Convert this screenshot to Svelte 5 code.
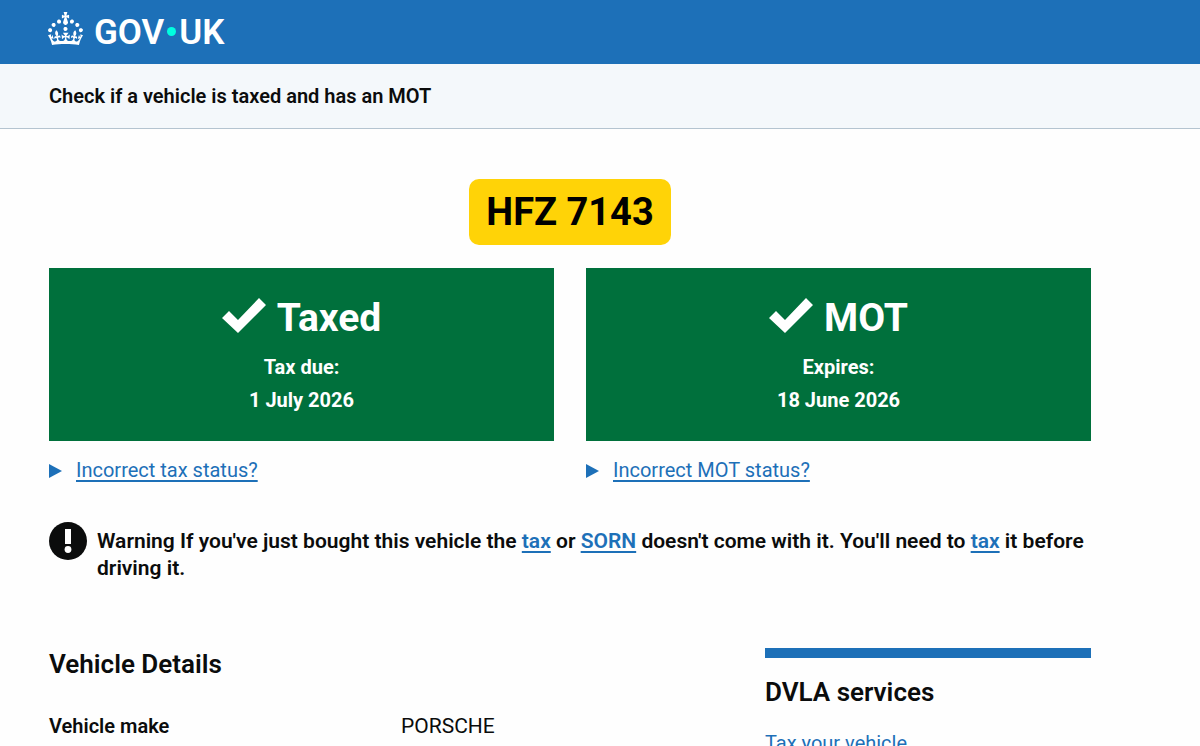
<script>
  const statuses = [
    { title: 'Taxed', label: 'Tax due:', date: '1 July 2026', help: 'Incorrect tax status?' },
    { title: 'MOT', label: 'Expires:', date: '18 June 2026', help: 'Incorrect MOT status?' }
  ];
  const details = [{ key: 'Vehicle make', value: 'PORSCHE' }];
</script>

<header class="masthead">
  <a class="logo" href="#home" aria-label="GOV.UK">
    <svg class="crown" viewBox="0 0 32 30" aria-hidden="true">
      <path d="M22.6 10.4c-1 .4-2-.1-2.4-1-.4-.9.1-2 1-2.4.9-.4 2 .1 2.4 1s-.1 2-1 2.4m-5.9 6.7c-.9.4-2-.1-2.4-1-.4-.9.1-2 1-2.4.9-.4 2 .1 2.4 1s-.1 2-1 2.4m10.8-3.7c-1 .4-2-.1-2.4-1-.4-.9.1-2 1-2.4.9-.4 2 .1 2.4 1s0 2-1 2.4m3.3 4.8c-1 .4-2-.1-2.4-1-.4-.9.1-2 1-2.4.9-.4 2 .1 2.4 1s-.1 2-1 2.4M17 4.7l2.3 1.2V2.5l-2.3.7-.2-.2.9-3h-3.4l.9 3-.2.2c-.1.1-2.3-.7-2.3-.7v3.4L15 4.7c.1.1.1.2.2.2l-1.3 4c-.1.2-.1.4-.1.6 0 1.1.8 2 1.9 2.2h.7c1-.2 1.9-1.1 1.9-2.1 0-.2 0-.4-.1-.6l-1.3-4c-.1-.2 0-.2.1-.3m-7.6 5.7c.9.4 2-.1 2.4-1 .4-.9-.1-2-1-2.4-.9-.4-2 .1-2.4 1s0 2 1 2.4m-5 3c.9.4 2-.1 2.4-1 .4-.9-.1-2-1-2.4-.9-.4-2 .1-2.4 1s.1 2 1 2.4m-3.2 4.8c.9.4 2-.1 2.4-1 .4-.9-.1-2-1-2.4-.9-.4-2 .1-2.4 1s0 2 1 2.4m14.8 11c4.4 0 8.6.3 12.3.8 1.1-4.5 2.4-7 3.7-8.8l-2.5-.9c.2 1.3.3 1.9 0 2.7-.4-.4-.8-1.1-1.1-2.3l-1.2 4c.7-.5 1.3-.8 2-.9-1.1 2.5-2.6 3.1-3.5 3-1.1-.2-1.7-1.2-1.5-2.1.3-1.2 1.5-1.5 2.1-.1 1.1-2.3-.8-3-2-2.3 1.9-1.9 2.1-3.5.6-5.6-2.1 1.6-2.1 3.2-1.2 5.5-1.2-1.4-3.2-.6-2.5 1.6.9-1.4 2.1-.5 1.9.8-.2 1.1-1.7 2.1-3.5 1.9-2.7-.2-2.9-2.1-2.9-3.6.7-.1 1.9.5 2.9 1.9l.4-4.3c-1.1 1.1-2.1 1.4-3.2 1.4.4-1.2 2.1-3 2.1-3h-5.4s1.7 1.9 2.1 3c-1.1 0-2.1-.2-3.2-1.4l.4 4.3c1-1.4 2.2-2 2.9-1.9-.1 1.5-.2 3.4-2.9 3.6-1.9.2-3.4-.8-3.5-1.9-.2-1.3 1-2.2 1.9-.8.7-2.3-1.2-3-2.5-1.6.9-2.2.9-3.9-1.2-5.5-1.5 2-1.3 3.7.6 5.6-1.2-.7-3.1 0-2 2.3.6-1.4 1.8-1.1 2.1.1.2.9-.3 1.9-1.5 2.1-.9.2-2.4-.5-3.5-3 .6 0 1.2.3 2 .9l-1.2-4c-.3 1.1-.7 1.9-1.1 2.3-.3-.8-.2-1.4 0-2.7l-2.9.9C1.3 23 2.6 25.5 3.7 30c3.7-.5 7.9-.8 12.3-.8" />
    </svg>
    <span class="wordmark">GOV<span class="dot"></span>UK</span>
  </a>
</header>

<nav class="service" aria-label="Service">
  <a href="#service">Check if a vehicle is taxed and has an MOT</a>
</nav>

<main>
  <h1 class="plate">HFZ 7143</h1>

  <div class="statuses">
    {#each statuses as s}
      <section>
        <div class="panel">
          <h2>
            <svg class="tick" viewBox="0 0 44 36" aria-hidden="true">
              <path d="M0 20L7 13L16 22L37 0L44 7L16 35Z" />
            </svg>
            {s.title}
          </h2>
          <p>{s.label}<br />{s.date}</p>
        </div>
        <details>
          <summary>
            <svg class="arrow" viewBox="0 0 13 14" aria-hidden="true"><path d="M0 0L13 7L0 14Z" /></svg>
            <span>{s.help}</span>
          </summary>
        </details>
      </section>
    {/each}
  </div>

  <div class="warning">
    <svg class="mark" viewBox="0 0 38 38" aria-hidden="true">
      <circle cx="19" cy="19" r="19" fill="#0b0c0c" />
      <path d="M16 7H22V22H16Z" fill="#fff" />
      <circle cx="19" cy="27.500" r="3.400" fill="#fff" />
    </svg>
    <p>
      Warning If you've just bought this vehicle the <a href="#tax">tax</a> or
      <a href="#sorn">SORN</a> doesn't come with it. You'll need to <a href="#tax">tax</a> it before
      driving it.
    </p>
  </div>

  <div class="columns">
    <section>
      <h2>Vehicle Details</h2>
      <dl>
        {#each details as d}
          <dt>{d.key}</dt>
          <dd>{d.value}</dd>
        {/each}
      </dl>
    </section>
    <aside>
      <h2>DVLA services</h2>
      <a href="#tax">Tax your vehicle</a>
    </aside>
  </div>
</main>

<style>
  :global(body) {
    background: #fefefe;
    color: #0b0c0c;
    font: 20px/27px Roboto, 'Liberation Sans', sans-serif;
  }
  h1, h2, p, dl, dd { margin: 0; }
  a { color: #1d70b8; text-underline-offset: 3px; }
  .masthead {
    background: #1d70b8;
    padding: 11px 48px 17px;
  }
  .logo {
    display: inline-flex;
    align-items: center;
    gap: 11px;
    height: 36px;
    color: #fff;
    text-decoration: none;
    vertical-align: top;
  }
  .crown { width: 35px; height: 33px; margin-bottom: 2px; fill: #fff; }
  .wordmark {
    display: flex;
    align-items: center;
    gap: 3px;
    padding-top: 7px;
    font-size: 35px;
    line-height: 36px;
    font-weight: 600;
  }
  .dot { width: 9px; height: 9px; margin-bottom: 2px; border-radius: 50%; background: #00ffe0; }
  .service {
    padding: 19px 49px 18px;
    background: #f4f8fb;
    border-bottom: 1px solid #b4c4d0;
  }
  .service a { color: #0b0c0c; font-weight: 600; text-decoration: none; }
  main { margin: 50px 109px 0 49px; }
  .plate {
    width: fit-content;
    margin: 0 auto 23px;
    padding: 0 17px;
    border-radius: 10px;
    background: #ffd307;
    color: #000;
    font-size: 38px;
    line-height: 66px;
    font-weight: 700;
  }
  .statuses { display: grid; grid-template-columns: 1fr 1fr; gap: 32px; }
  .panel {
    padding: 25px 16px 24px;
    background: #00703c;
    color: #fff;
    text-align: center;
    font-weight: 700;
  }
  .panel h2 {
    display: flex;
    justify-content: center;
    align-items: center;
    gap: 11px;
    margin-bottom: 8px;
    font-size: 39px;
    line-height: 50px;
  }
  .tick { width: 44px; height: 36px; margin-bottom: 4px; fill: #fff; }
  .panel p { line-height: 33px; }
  details { margin-top: 16px; }
  summary {
    display: flex;
    align-items: center;
    gap: 14px;
    width: fit-content;
    color: #1d70b8;
    cursor: pointer;
    list-style: none;
  }
  summary span { text-decoration: underline; text-underline-offset: 3px; }
  .arrow { width: 13px; height: 14px; fill: #1d70b8; }
  .warning {
    display: flex;
    align-items: flex-start;
    gap: 10px;
    margin-top: 38px;
    font-size: 21px;
    font-weight: 600;
  }
  .mark { flex: none; width: 38px; height: 38px; }
  .warning p { padding-top: 6px; }
  .columns {
    display: grid;
    grid-template-columns: 2fr 1fr;
    gap: 64px;
    margin-top: 66px;
  }
  .columns h2 { font-size: 26px; line-height: 32px; font-weight: 600; }
  dl { display: grid; grid-template-columns: 27fr 23fr; margin-top: 33px; }
  dt { font-weight: 600; }
  dd { font-size: 21px; }
  aside { padding-top: 18px; border-top: 10px solid #1d70b8; }
  aside a { display: block; margin-top: 22px; text-decoration: underline; }
</style>
